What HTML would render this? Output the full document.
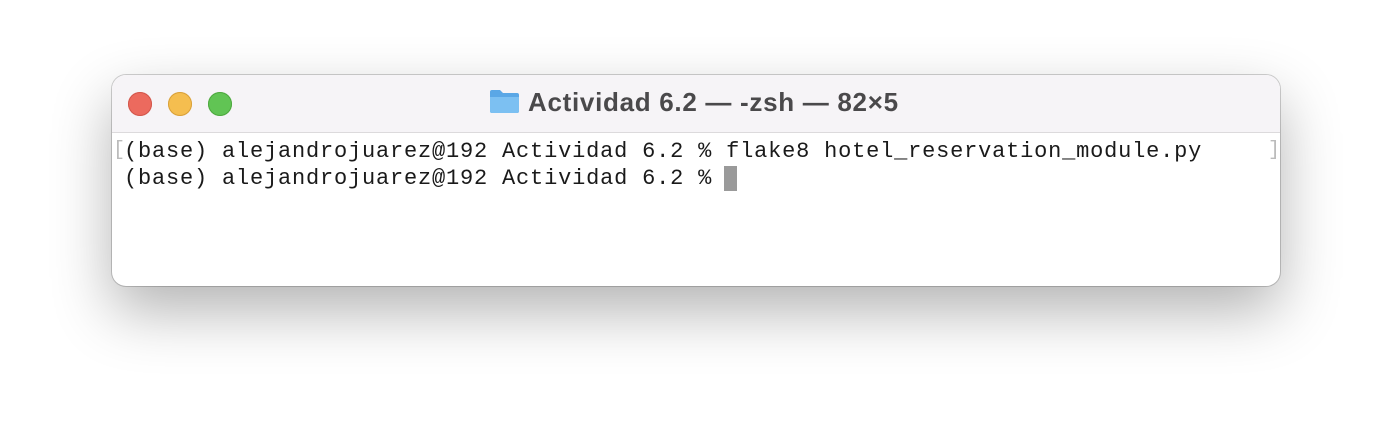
<!DOCTYPE html>
<html><head><style>
body{margin:0;width:1392px;height:434px;background:#fff;overflow:hidden;position:relative;font-family:"Liberation Sans",sans-serif}
.win{position:absolute;left:112px;top:75px;width:1168px;height:211px;border-radius:14px;background:#fff;box-shadow:0 0 0 1px rgba(0,0,0,0.18),0 25px 60px rgba(0,0,0,0.3);overflow:hidden}
.tb{position:absolute;left:0;top:0;width:100%;height:57px;background:#f6f4f7;border-bottom:1px solid #dcdadc}
.d{position:absolute;top:17px;width:24px;height:24px;border-radius:50%}
.title{position:absolute;left:416px;top:12px;font-weight:bold;font-size:26px;letter-spacing:0.7px;color:#4a494b;white-space:nowrap}
.txt{position:absolute;left:12px;top:63px;font-family:"Liberation Mono",monospace;font-size:22px;letter-spacing:0.8px;line-height:27px;color:#1a1a1a;white-space:pre}
.cur{position:absolute;left:612px;top:91px;width:13px;height:25px;background:#9a9a9a}
.br{position:absolute;color:#bbb;font-family:"Liberation Mono",monospace;font-size:20px}
</style></head><body>
<div class="win">
<div class="tb">
<div class="d" style="left:16px;background:#ec6a5e;box-shadow:inset 0 0 0 1px #d2574c"></div>
<div class="d" style="left:56px;background:#f5be4f;box-shadow:inset 0 0 0 1px #d9a13a"></div>
<div class="d" style="left:96px;background:#61c454;box-shadow:inset 0 0 0 1px #4ea83f"></div>
<svg style="position:absolute;left:377px;top:14px" width="31" height="25" viewBox="0 0 31 25"><path d="M1 3q0-2 2-2h8l3 3h14q2 0 2 2v16q0 2-2 2H3q-2 0-2-2z" fill="#5aa7e6"/><path d="M1 8h29v14q0 2-2 2H3q-2 0-2-2z" fill="#7cc0f2"/></svg>
<div class="title">Actividad 6.2 — -zsh — 82×5</div>
</div>
<div class="br" style="left:1px;top:64px">[</div>
<div class="br" style="left:1156px;top:64px">]</div>
<div class="txt">(base) alejandrojuarez@192 Actividad 6.2 % flake8 hotel_reservation_module.py
(base) alejandrojuarez@192 Actividad 6.2 % </div>
<div class="cur"></div>
</div>
</body></html>
